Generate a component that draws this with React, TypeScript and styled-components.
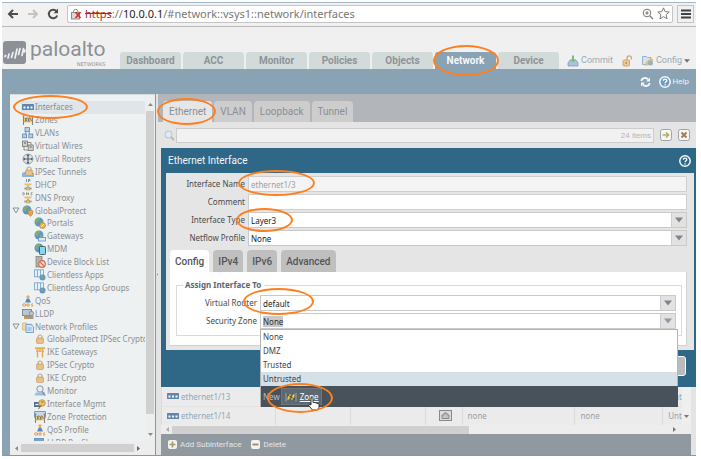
import React from "react";
import styled, { createGlobalStyle } from "styled-components";

const uiFont = '"Noto Sans", "Open Sans", sans-serif';
const headFont = 'Roboto, "Liberation Sans", sans-serif';

const colors = {
  band: "#89a3b5",
  panel: "#e4e4e4",
  dialog: "#2f6886",
  muted: "#8b8f94",
  ring: "#ff7f1f",
};

const GlobalStyle = createGlobalStyle`
  *, *::before, *::after { box-sizing: border-box; }
  body { margin: 0; background: #fff; font-family: ${uiFont}; font-size: 8px; }
  button, input, select { font: inherit; color: inherit; margin: 0; padding: 0; border: 0; background: none; border-radius: 0; }
  ul { list-style: none; margin: 0; padding: 0; }
  svg { display: block; flex: none; }
`;

/* ---------- shell ---------- */

const Page = styled.div`
  height: 100vh;
  padding: 2px 5px 3px 2px;
`;

const Shell = styled.div`
  height: 100%;
  display: flex;
  flex-direction: column;
  border-top: 1px solid #a4b8c8;
  border-bottom: 1px solid #8299aa;
  background: ${colors.band};
`;

const BrowserBar = styled.div`
  flex: none;
  height: 24px;
  display: flex;
  align-items: center;
  gap: 8px;
  padding: 0 2px 2px 5px;
  background: #f1f1f1;
  border-bottom: 1px solid #b9b9b9;
`;

const IconButton = styled.button`
  display: flex;
  align-items: center;
  justify-content: center;
  flex: none;
`;

const Address = styled.div`
  flex: 1;
  min-width: 0;
  height: 18px;
  display: flex;
  align-items: center;
  gap: 3px;
  padding: 0 2px 0 3px;
  margin-right: -4px;
  background: #fff;
  border: 1px solid #c4c4c4;
  border-radius: 2px;
`;

const Url = styled.span`
  flex: 1;
  font-size: 11px;
  line-height: 16px;
  white-space: nowrap;
  overflow: hidden;
  color: #777;
`;

const Insecure = styled.s`
  color: #b42525;
`;

const Host = styled.span`
  color: #222;
`;

const MenuButton = styled(IconButton)`
  width: 17px;
  height: 18px;
  border: 1px solid #c4c4c4;
`;

const Header = styled.header`
  flex: none;
  height: 42px;
  display: flex;
  align-items: flex-end;
  background: #f0f0f0;
`;

const Logo = styled.div`
  flex: none;
  width: 118px;
  align-self: flex-start;
  display: flex;
  align-items: center;
  gap: 4px;
  padding: 10px 0 0 1px;
  color: #8b9196;
`;

const LogoText = styled.div`
  font-family: ${headFont};
  font-size: 21px;
  line-height: 24px;
`;

const LogoSub = styled.div`
  font-family: "DejaVu Sans", sans-serif;
  font-size: 5px;
  line-height: 6px;
  text-align: right;
`;

const MainTabs = styled.nav`
  display: flex;
  gap: 2px;
`;

const MainTab = styled.button<{ $active?: boolean }>`
  position: relative;
  width: 61px;
  height: 17px;
  border-radius: 3px 3px 0 0;
  font-family: ${headFont};
  font-weight: bold;
  font-size: 10px;
  line-height: 18px;
  color: ${(p) => (p.$active ? "#f4f8fa" : "#8d9498")};
  background: ${(p) => (p.$active ? colors.band : "#d3dada")};
`;

const Tools = styled.div`
  margin-left: auto;
  display: flex;
  align-items: center;
  gap: 9px;
  padding-right: 6px;
`;

const ToolButton = styled.button<{ $light?: boolean }>`
  display: flex;
  align-items: center;
  gap: 2px;
  font-family: ${headFont};
  font-size: ${(p) => (p.$light ? "8px" : "9px")};
  line-height: 17px;
  color: ${(p) => (p.$light ? "#eef4f8" : "#98a9b5")};
`;

const HelpBand = styled.div`
  flex: none;
  height: 25px;
  display: flex;
  align-items: center;
  justify-content: flex-end;
  gap: 8px;
  padding-right: 7px;
`;

const Body = styled.div`
  flex: 1;
  min-height: 0;
  display: flex;
  padding-left: 8px;
`;

/* ---------- sidebar ---------- */

const Sidebar = styled.aside`
  flex: none;
  width: 145px;
  display: flex;
  flex-direction: column;
  background: #eef1f1;
  border-top: 1px solid #d4dadd;
`;

const TreeArea = styled.div`
  flex: 1;
  min-height: 0;
  display: flex;
`;

const Tree = styled.ul`
  flex: 1;
  min-width: 0;
  padding-top: 6px;
  overflow: hidden;
`;

const TreeRows = styled.div`
  display: flex;
  flex-direction: column;
  height: 348px;
`;

const TreeItem = styled.li<{ $level: number; $selected?: boolean }>`
  position: relative;
  flex: 1;
  display: flex;
  align-items: center;
  gap: 1px;
  margin-left: ${(p) => (p.$selected ? "11px" : "0")};
  padding-left: ${(p) => (p.$selected ? 1 : p.$level * 12)}px;
  white-space: nowrap;
  line-height: 12px;
  color: ${colors.muted};
  background: ${(p) => (p.$selected ? "#dfe5e8" : "transparent")};
`;

const Twisty = styled.button`
  width: 8px;
  margin: 0 1px 0 -10px;
`;

const VTrack = styled.div`
  flex: none;
  width: 10px;
  display: flex;
  flex-direction: column;
  align-items: center;
  justify-content: space-between;
  padding: 7px 0 4px;
  gap: 4px;
  background: #eeeeee;
`;

const VThumb = styled.div`
  width: 8px;
  flex: 1;
  margin-bottom: 14px;
  background: #d0d0d0;
`;

const HTrack = styled.div<{ $height: number; $end: number }>`
  flex: none;
  height: ${(p) => p.$height}px;
  display: flex;
  align-items: center;
  gap: 2px;
  padding: 0 ${(p) => p.$end}px 0 4px;
  background: #ededed;
`;

const GridTrack = styled(HTrack)`
  margin: 0 5px 0 3px;
`;

const HThumb = styled.div<{ $share: number }>`
  width: ${(p) => p.$share}%;
  height: 8px;
  margin-right: auto;
  background: #d0d0d0;
`;

const Splitter = styled.div`
  flex: none;
  width: 3px;
  display: flex;
  align-items: center;
  background: #dfe4e7;
  border-left: 1px solid #7f98aa;
`;

/* ---------- content ---------- */

const Content = styled.main`
  flex: 1;
  min-width: 0;
  display: flex;
  flex-direction: column;
  background: ${colors.panel};
`;

const SubTabs = styled.div`
  flex: none;
  height: 28px;
  display: flex;
  align-items: flex-end;
  gap: 2px;
  padding-left: 5px;
  background: #b2b6bb;
`;

const SubTab = styled.button<{ $active?: boolean }>`
  position: relative;
  height: 21px;
  padding: 0 6px;
  border-radius: 4px 4px 0 0;
  font-family: ${headFont};
  font-size: 10px;
  color: #8b8f93;
  background: ${(p) => (p.$active ? "#e6e6e6" : "#cdcdcd")};
`;

const SearchRow = styled.div`
  flex: none;
  height: 26px;
  display: flex;
  align-items: center;
  gap: 6px;
  padding: 0 6px 0 6px;
`;

const SearchBox = styled.label`
  flex: 1;
  display: flex;
  align-items: center;
  gap: 1px;
`;

const SearchField = styled.span`
  flex: 1;
  height: 15px;
  display: flex;
  align-items: center;
  padding-right: 2px;
  background: #f1f1f1;
  border: 1px solid #cccccc;
  color: #b5b5b5;
  font-family: "Liberation Sans", sans-serif;
  font-size: 8px;
`;

const SearchInput = styled.input`
  flex: 1;
  min-width: 0;
  outline: none;
`;

const Dialog = styled.section`
  position: relative;
  z-index: 2;
  flex: none;
  margin-left: 3px;
  padding: 0 2px 0 5px;
  background: ${colors.dialog};
`;

const DialogTitle = styled.div`
  height: 25px;
  display: flex;
  align-items: center;
  justify-content: space-between;
  padding: 0 3px 0 2px;
  font-family: ${headFont};
  font-size: 10px;
  color: #f2f7fa;
`;

const DialogBody = styled.div`
  padding: 3px 7px 4px 4px;
  background: #e5e5e5;
`;

const FormRow = styled.div<{ $labelWidth: number }>`
  position: relative;
  display: grid;
  grid-template-columns: ${(p) => p.$labelWidth}px 1fr;
  column-gap: 3px;
  align-items: center;
  height: 16px;
  margin-bottom: 2px;
  color: #4a4a4a;
  > label, > span:first-child { text-align: right; line-height: 12px; }
`;

const TextInput = styled.input`
  width: 100%;
  height: 16px;
  padding: 1px 2px 0;
  background: #fff;
  border: 1px solid #cfcfcf;
  color: #333;
  &:disabled { background: #f4f4f4; color: #a0a0a0; }
`;

const Picker = styled.div`
  display: flex;
  height: 16px;
  background: #fff;
  border: 1px solid #c9c9c9;
`;

const Select = styled.select`
  flex: 1;
  min-width: 0;
  appearance: none;
  padding: 1px 2px 0;
  color: #222;
  outline: none;
`;

const ComboButton = styled.button`
  flex: 1;
  padding: 1px 2px 0;
  text-align: left;
  color: #333;
`;

const Selected = styled.span`
  background: #c9c9c9;
`;

const Trigger = styled.span`
  width: 15px;
  display: flex;
  align-items: center;
  justify-content: center;
  background: #e2e2e2;
  border-left: 1px solid #cfcfcf;
`;

const DialogTabs = styled.div`
  display: flex;
  gap: 4px;
  padding-top: 2px;
`;

const DialogTab = styled.button<{ $active?: boolean }>`
  height: 22px;
  padding: 0 5px;
  border-radius: 4px 4px 0 0;
  font-family: ${headFont};
  font-weight: 500;
  font-size: 10px;
  color: #555;
  background: ${(p) => (p.$active ? "#fff" : "#bfbfbf")};
`;

const TabPanel = styled.div`
  padding: 7px 4px 9px 6px;
  background: #fff;
  border-right: 1px solid #d2d2d2;
  border-bottom: 1px solid #d2d2d2;
`;

const Group = styled.fieldset`
  margin: 0;
  padding: 4px 5px 4px 6px;
  border: 1px solid #dadada;
  min-width: 0;
`;

const Legend = styled.legend`
  padding: 0 3px 0 2px;
  font-weight: bold;
  font-size: 8px;
  line-height: 12px;
  color: #5a6470;
`;

const Popup = styled.div`
  position: absolute;
  top: 16px;
  left: 77px;
  right: -2px;
  z-index: 3;
  background: #fff;
  border: 1px solid #b4b4b4;
  color: #444;
`;

const Option = styled.li<{ $active?: boolean }>`
  height: 14px;
  padding: 0 2px;
  line-height: 14px;
  background: ${(p) => (p.$active ? "#d6e0e7" : "transparent")};
`;

const NewBar = styled.div`
  position: relative;
  height: 21px;
  display: flex;
  align-items: center;
  gap: 1px;
  padding-left: 2px;
  margin: 0 -1px -1px 0;
  background: #47525b;
  color: #b9c0c5;
`;

const NewZone = styled.button`
  height: 17px;
  display: flex;
  align-items: center;
  gap: 3px;
  padding: 0 2px 0 3px;
  background: #5e6870;
  border: 1px solid #6d777f;
  color: #fff;
  text-decoration: underline;
`;

const Cursor = styled.svg`
  position: absolute;
  left: 47px;
  top: 11px;
`;

const DialogFooter = styled.div`
  height: 37px;
  display: flex;
  align-items: center;
  justify-content: flex-end;
  padding: 0 8px 6px 0;
`;

const DialogButton = styled.button`
  width: 50px;
  height: 20px;
  border: 1px solid #fff;
  border-radius: 3px;
  background: #b9bcbe;
`;

const Grid = styled.div`
  flex: 1;
  min-height: 0;
  display: flex;
  overflow: hidden;
  margin: 0 5px 0 3px;
  background: #ebebeb;
`;

const Table = styled.table`
  flex: 1;
  align-self: flex-start;
  table-layout: fixed;
  border-collapse: collapse;
  color: #9aa0a5;
`;

const Cell = styled.td<{ $blue?: boolean }>`
  height: 19px;
  padding: 0 0 0 5px;
  white-space: nowrap;
  overflow: hidden;
  border-left: 1px solid #dcdcdc;
  border-bottom: 1px solid #e3e3e3;
  color: ${(p) => (p.$blue ? "#8fa8bc" : "inherit")};
`;

const CellLine = styled.div<{ $center?: boolean }>`
  display: flex;
  align-items: center;
  gap: 2px;
  margin-left: ${(p) => (p.$center ? "8px" : "0")};
`;

const GridScroll = styled.div`
  flex: none;
  width: 9px;
  display: flex;
  align-items: flex-end;
  justify-content: center;
  padding-bottom: 6px;
  background: #efefef;
`;

const Footer = styled.footer`
  flex: none;
  height: 21px;
  display: flex;
  align-items: center;
  gap: 10px;
  margin: 0 5px 0 3px;
  padding-left: 7px;
  background: #9199a0;
`;

const FooterButton = styled.button`
  display: flex;
  align-items: center;
  gap: 3px;
  font-family: ${headFont};
  font-size: 8px;
  color: #e3e6e8;
`;

/* Highlight ellipse laid over the control that it marks. */
const Ring = styled.span<{ $x: number; $y: number; $w: number; $h: number }>`
  position: absolute;
  z-index: 5;
  left: ${(p) => p.$x}px;
  top: ${(p) => p.$y}px;
  width: ${(p) => p.$w}px;
  height: ${(p) => p.$h}px;
  border: 2px solid ${colors.ring};
  border-radius: 50%;
  pointer-events: none;
`;

/* ---------- icons ---------- */

const Arrow = ({ dir, size = 5, color = "#8a8a8a" }: { dir: "up" | "down" | "left" | "right"; size?: number; color?: string }) => {
  const points = {
    up: "0,8 5,2 10,8",
    down: "0,2 5,8 10,2",
    left: "8,0 2,5 8,10",
    right: "2,0 8,5 2,10",
  }[dir];
  return (
    <svg width={size} height={size} viewBox="0 0 10 10" aria-hidden="true">
      <polygon points={points} fill={color} />
    </svg>
  );
};

const globe = (
  <g>
    <circle cx="5" cy="5" r="4.5" fill="#5f94c8" />
    <path d="M2 2 Q4 0 6 1 L6 3 L4 4 L4 6 L2 6 L1 4Z M6 5 L9 4 L8 8 L6 8Z" fill="#7fb069" />
  </g>
);

const goldLock = (x: number, y: number) => (
  <g transform={`translate(${x} ${y})`}>
    <path d="M2 4 V3 a2 2 0 0 1 4 0 V4" fill="none" stroke="#b9a58c" strokeWidth="1.2" />
    <rect x="0.5" y="4" width="7" height="5.5" rx="1" fill="#e3b878" stroke="#c39a62" strokeWidth="0.6" />
    <path d="M1.5 6h5M1.5 8h5" stroke="#f3dcb4" strokeWidth="0.6" />
  </g>
);

const qosFigure = (
  <g>
    <circle cx="6" cy="1.800" r="1.600" fill="#e8a952" />
    <path d="M4.800 3.400h2.400l1.800 4.200H3z" fill="#5b87bd" />
    <ellipse cx="2.200" cy="10" rx="1.500" ry="1.300" fill="none" stroke="#e6973f" />
    <ellipse cx="6" cy="10" rx="1.300" ry="1.200" fill="none" stroke="#e6973f" />
    <path d="M11 8.800c-2 0-2 1.100-.8 1.200s1 1.300-1 1.200" fill="none" stroke="#e6973f" />
  </g>
);

const ports = (
  <g>
    <rect x="0" y="3" width="12" height="6" rx="0.6" fill="#5f86ae" />
    <path d="M1.500 7.500v-2h2v2zM5 7.500v-2h2v2zM8.500 7.500v-2h2v2z" fill="#f4f8fb" />
  </g>
);

const fence = (
  <g>
    <path d="M1.500 1.500v9.500M10.500 1.500v9.500M0.500 2h2M9.500 2h2" stroke="#8a847c" strokeWidth="1.100" />
    <rect x="2" y="3" width="8" height="5.500" fill="#f0d077" />
    <path d="M3 4l2 3.500M5.500 4l2 3.500M8 4l1.500 3M3 8L4.500 3.500M6 8l1.500-4.500" stroke="#77716a" strokeWidth="0.900" />
  </g>
);

const server = (label: "ip" | "dns") => (
  <g>
    {label === "ip" ? (
      <path d="M4.500 0v3M6.500 3V0.500h1.500v1.200H6.500" fill="none" stroke="#6f93b8" strokeWidth="1" />
    ) : (
      <path d="M1 3V0.500c2 0 2 2.500 0 2.500M4.500 3V0.500l2 2.500V0.500M10.500 0.500c-2 0-2 1.200-1 1.300s1 1.200-1 1.200" fill="none" stroke="#8c8f92" strokeWidth="0.900" />
    )}
    <path d="M2 4.500h8l-1 2H3z" fill="#edc267" />
    <path d="M6 6.500v2M2.500 9.500h7M3 8.500v2M9 8.500v2" stroke="#7a9cc0" strokeWidth="1.200" />
    <rect x="4.200" y="8.200" width="3.600" height="2.800" fill="#edc267" stroke="#b08f4c" strokeWidth="0.500" />
  </g>
);

const drawings: Record<string, React.ReactNode> = {
  ports,
  fence,
  vlan: (
    <g fill="#b7cfe6" stroke="#5d86b3" strokeWidth="0.800">
      <path d="M4 5l-1 3M7 5l1 3" fill="none" />
      <rect x="3" y="0.600" width="4.500" height="4" />
      <rect x="0.600" y="7" width="4" height="3.800" />
      <rect x="6.800" y="7" width="4" height="3.800" />
    </g>
  ),
  wires: (
    <g stroke="#77736d" strokeWidth="0.800" fill="#d4d1ca">
      <rect x="0.500" y="1" width="5" height="5.500" />
      <rect x="6.200" y="5" width="5" height="5.500" />
      <path d="M2 6.500v3.500h4M5.500 2.500h3.500V5" fill="none" />
      <path d="M2 3h2M7.700 7h2" stroke="#3f3f3f" />
    </g>
  ),
  router: (
    <g>
      <circle cx="6" cy="6" r="5" fill="#dfe3e6" stroke="#8d979f" strokeWidth="0.900" />
      <path d="M6 1.500v9M1.500 6h9" stroke="#58646e" strokeWidth="1.200" />
      <path d="M6 1l1.600 2H4.400zM6 11l1.600-2H4.400zM1 6l2-1.600v3.200zM11 6L9 4.400v3.200z" fill="#58646e" />
    </g>
  ),
  tunnel: (
    <g>
      <path d="M0 7q4-3 12 0v4H0z" fill="#8fb4d6" />
      {goldLock(3, 0)}
    </g>
  ),
  dhcp: server("ip"),
  dns: server("dns"),
  protect: (
    <g>
      {globe}
      <path d="M6 6q3-2 5 0 0 4-2.500 5.500Q6 10 6 6z" fill="#eea24c" stroke="#a9733a" strokeWidth="0.500" />
    </g>
  ),
  portal: (
    <g>
      {globe}
      <circle cx="8.500" cy="8.500" r="3" fill="#e5b24f" stroke="#a97f37" strokeWidth="0.600" />
      <path d="M7 10l3-3" stroke="#fff" strokeWidth="0.800" />
    </g>
  ),
  gateway: (
    <g>
      {globe}
      <rect x="4.500" y="7.500" width="7" height="3.500" fill="#dcebf7" stroke="#5f8fbe" strokeWidth="0.800" />
    </g>
  ),
  mdm: (
    <g>
      {globe}
      <rect x="5.500" y="3.500" width="6" height="8" rx="0.800" fill="#7fdcec" stroke="#51606b" strokeWidth="1" />
    </g>
  ),
  block: (
    <g>
      <rect x="2" y="0.500" width="6" height="10.500" fill="#b5b2ae" stroke="#86827d" strokeWidth="0.800" />
      <circle cx="8" cy="8" r="3.300" fill="#f3e1d8" stroke="#d0683f" strokeWidth="1.200" />
      <path d="M5.800 5.800l4.400 4.400" stroke="#d0683f" strokeWidth="1.200" />
    </g>
  ),
  clientless: (
    <g>
      <rect x="0.500" y="0.800" width="9" height="7" fill="#e6f0f8" stroke="#7ea6cc" strokeWidth="0.900" />
      <path d="M3.500 1v7M6.500 1v7" stroke="#7ea6cc" strokeWidth="0.900" />
      <circle cx="8.500" cy="8.500" r="3" fill="#6394c6" />
      <path d="M7 7l2-.6v2l-1.400.6zM9 9.500l2-1-.8 2z" fill="#82b36b" />
    </g>
  ),
  qos: qosFigure,
  lldp: (
    <g>
      <rect x="0.500" y="1.500" width="9" height="6" fill="#b9c6d1" stroke="#77858f" strokeWidth="0.900" />
      <rect x="2" y="7.500" width="9.500" height="3.500" fill="#9d9993" />
      <circle cx="9.500" cy="5.500" r="2.200" fill="#c9c4bb" stroke="#827d76" strokeWidth="0.700" />
      <path d="M2 10.500h3" stroke="#e59a43" strokeWidth="1.200" />
    </g>
  ),
  profiles: (
    <g>
      <path d="M0.500 2h4l1 1.200H10V9H0.500z" fill="#f0d9a8" stroke="#cdb078" strokeWidth="0.700" />
      <path d="M4 3.500h5l2.500 2.500v5.500H4z" fill="#d5e6f5" stroke="#6d99c6" strokeWidth="0.900" />
      <path d="M5.500 7h4M5.500 9h4" stroke="#6d99c6" strokeWidth="0.800" />
    </g>
  ),
  lock: goldLock(2, 1),
  gate: (
    <g stroke="#e2ab55" fill="none">
      <path d="M1 2.200h10" strokeWidth="1.800" />
      <path d="M2 5.200h8" strokeWidth="1.200" />
      <path d="M3.500 2v9.500M8.500 2v9.500M6 2v3" strokeWidth="1.500" />
    </g>
  ),
  monitor: (
    <g>
      <path d="M0.500 10.500q1-4 4-3t6-1l1 4z" fill="#9cc1e0" />
      <circle cx="6" cy="4" r="3.200" fill="#e3eef6" stroke="#8697a5" strokeWidth="1" />
      <path d="M8 6.500l3 4" stroke="#8697a5" strokeWidth="1.500" />
    </g>
  ),
  mgmt: (
    <g>
      <rect x="0" y="4" width="7" height="5" fill="#4d7299" />
      <path d="M1.500 6.500h3" stroke="#fff" strokeWidth="1.200" />
      <circle cx="8" cy="5" r="3.300" fill="#f0c069" stroke="#b48740" strokeWidth="0.700" />
      <path d="M4.500 11l3-4M7 4h2.500" stroke="#996f33" strokeWidth="1.100" />
    </g>
  ),
  zoneProtect: (
    <g>
      <path d="M0.500 0.500h11v6h-11z" fill="#c7dbee" stroke="#6d93bb" strokeWidth="0.900" />
      <g transform="translate(0 1)">{fence}</g>
    </g>
  ),
  lldpProfile: (
    <g>
      <rect x="0.500" y="1.500" width="9" height="7" fill="#c9dcee" stroke="#5f8fc0" strokeWidth="0.900" />
      <path d="M0.500 3h9" stroke="#5f8fc0" strokeWidth="1.500" />
      <circle cx="9" cy="6" r="2.200" fill="#e5b668" />
    </g>
  ),
  newZone: (
    <g>
      <path d="M1 2v8.500M11 2v8.500" stroke="#a9a9a9" strokeWidth="0.900" />
      <path d="M2 8.500L4 3.500h2l-2 5zM6 8.500l2-5h2l-2 5z" fill="#f5cf3e" />
      <path d="M2 3.500l8 5" stroke="#3c3c3c" strokeWidth="0.700" />
    </g>
  ),
};

const Icon = ({ name, size = 12 }: { name: string; size?: number }) => (
  <svg width={size} height={size} viewBox="0 0 12 12" aria-hidden="true">
    {drawings[name]}
  </svg>
);

const HelpIcon = ({ fill, size = 11 }: { fill: string; size?: number }) => (
  <svg width={size} height={size} viewBox="0 0 12 12" aria-hidden="true">
    <circle cx="6" cy="6" r="5.200" fill={fill} stroke="#f3f8fb" strokeWidth="1.500" />
    <path d="M4.300 4.800c0-2.200 3.500-2.200 3.500-.2 0 1.200-1.700 1.200-1.700 2.600M6.100 8.200v1.200" fill="none" stroke="#fff" strokeWidth="1.300" />
  </svg>
);

const ConfigIcon = () => (
  <svg width="12" height="12" viewBox="0 0 12 12" aria-hidden="true">
    <path d="M0.500 1.500h4l1 1H9v7H0.500z" fill="#d3e3f0" stroke="#8aaccb" strokeWidth="0.900" />
    <path d="M3 11l1-4 5-4 2.500 2-4 5z" fill="#e8bd73" />
    <circle cx="8.500" cy="8" r="2.500" fill="#8fb3d3" />
  </svg>
);

/* ---------- data ---------- */

type Node = { icon: string; label: string; level: number; open?: boolean; selected?: boolean };

const nodes: Node[] = [
  { icon: "ports", label: "Interfaces", level: 1, selected: true },
  { icon: "fence", label: "Zones", level: 1 },
  { icon: "vlan", label: "VLANs", level: 1 },
  { icon: "wires", label: "Virtual Wires", level: 1 },
  { icon: "router", label: "Virtual Routers", level: 1 },
  { icon: "tunnel", label: "IPSec Tunnels", level: 1 },
  { icon: "dhcp", label: "DHCP", level: 1 },
  { icon: "dns", label: "DNS Proxy", level: 1 },
  { icon: "protect", label: "GlobalProtect", level: 1, open: true },
  { icon: "portal", label: "Portals", level: 2 },
  { icon: "gateway", label: "Gateways", level: 2 },
  { icon: "mdm", label: "MDM", level: 2 },
  { icon: "block", label: "Device Block List", level: 2 },
  { icon: "clientless", label: "Clientless Apps", level: 2 },
  { icon: "clientless", label: "Clientless App Groups", level: 2 },
  { icon: "qos", label: "QoS", level: 1 },
  { icon: "lldp", label: "LLDP", level: 1 },
  { icon: "profiles", label: "Network Profiles", level: 1, open: true },
  { icon: "lock", label: "GlobalProtect IPSec Crypto", level: 2 },
  { icon: "gate", label: "IKE Gateways", level: 2 },
  { icon: "lock", label: "IPSec Crypto", level: 2 },
  { icon: "lock", label: "IKE Crypto", level: 2 },
  { icon: "monitor", label: "Monitor", level: 2 },
  { icon: "mgmt", label: "Interface Mgmt", level: 2 },
  { icon: "zoneProtect", label: "Zone Protection", level: 2 },
  { icon: "qos", label: "QoS Profile", level: 2 },
  { icon: "lldpProfile", label: "LLDP Profile", level: 2 },
];

const mainTabs = ["Dashboard", "ACC", "Monitor", "Policies", "Objects", "Network", "Device"];
const subTabs = ["Ethernet", "VLAN", "Loopback", "Tunnel"];
const dialogTabs = ["Config", "IPv4", "IPv6", "Advanced"];
const zones = ["None", "DMZ", "Trusted", "Untrusted"];

/* ---------- parts ---------- */

const Browser = () => (
  <BrowserBar>
    <IconButton aria-label="Back">
      <svg width="12" height="12" viewBox="0 0 12 12">
        <path d="M11 6H2M6 2L2 6l4 4" fill="none" stroke="#4c4c4c" strokeWidth="2" />
      </svg>
    </IconButton>
    <IconButton aria-label="Forward">
      <svg width="12" height="12" viewBox="0 0 12 12">
        <path d="M1 6h9M6 2l4 4-4 4" fill="none" stroke="#c3c3c3" strokeWidth="2" />
      </svg>
    </IconButton>
    <IconButton aria-label="Reload">
      <svg width="12" height="12" viewBox="0 0 12 12">
        <path d="M9.500 3.200A4.300 4.300 0 1 0 10.200 7.500" fill="none" stroke="#4c4c4c" strokeWidth="2" />
        <path d="M11 0.500V5.300H6.500z" fill="#4c4c4c" />
      </svg>
    </IconButton>
    <Address>
      <svg width="11" height="12" viewBox="0 0 11 12" aria-hidden="true">
        <path d="M2.500 5V3.500a2.200 2.200 0 0 1 4.400 0V5" fill="none" stroke="#8d8d8d" />
        <rect x="0.500" y="4.500" width="8" height="6.500" fill="#d9d9d9" stroke="#8d8d8d" />
        <path d="M4.500 4l5 6M9.500 4l-5 6" stroke="#d8322b" strokeWidth="1.800" />
      </svg>
      <Url>
        <Insecure>https</Insecure>://<Host>10.0.0.1</Host>/#network::vsys1::network/interfaces
      </Url>
      <IconButton aria-label="Zoom">
        <svg width="12" height="12" viewBox="0 0 12 12">
          <circle cx="5" cy="5" r="3.800" fill="none" stroke="#777" />
          <path d="M8 8l3 3M3.300 5h3.400M5 3.300v3.400" stroke="#777" strokeWidth="1.200" />
        </svg>
      </IconButton>
      <IconButton aria-label="Bookmark">
        <svg width="13" height="13" viewBox="0 0 12 12">
          <path d="M6 0.800l1.500 3.500 3.800.3-2.900 2.500.9 3.800L6 8.900l-3.300 2 .9-3.800L.7 4.600l3.800-.3z" fill="none" stroke="#777" strokeWidth="0.900" />
        </svg>
      </IconButton>
    </Address>
    <MenuButton aria-label="Menu">
      <svg width="10" height="10" viewBox="0 0 10 10">
        <path d="M0 1.500h10M0 5h10M0 8.500h10" stroke="#3f4148" strokeWidth="2" />
      </svg>
    </MenuButton>
  </BrowserBar>
);

const SelectField = ({ id, label, value, labelWidth, children }: { id: string; label: string; value: string; labelWidth: number; children?: React.ReactNode }) => (
  <FormRow $labelWidth={labelWidth}>
    <label htmlFor={id}>{label}</label>
    <Picker>
      <Select id={id} defaultValue={value}>
        <option>{value}</option>
      </Select>
      <Trigger>
        <Arrow dir="down" size={8} color="#7d868e" />
      </Trigger>
    </Picker>
    {children}
  </FormRow>
);

const InterfaceDialog = () => (
  <Dialog role="dialog" aria-labelledby="dialog-title">
    <DialogTitle>
      <span id="dialog-title">Ethernet Interface</span>
      <IconButton aria-label="Dialog help">
        <HelpIcon fill={colors.dialog} size={12} />
      </IconButton>
    </DialogTitle>
    <DialogBody>
      <FormRow $labelWidth={75}>
        <label htmlFor="if-name">Interface Name</label>
        <TextInput id="if-name" defaultValue="ethernet1/3" disabled />
        <Ring $x={68} $y={-6} $w={77} $h={26} />
      </FormRow>
      <FormRow $labelWidth={75}>
        <label htmlFor="if-comment">Comment</label>
        <TextInput id="if-comment" />
      </FormRow>
      <SelectField id="if-type" label="Interface Type" value="Layer3" labelWidth={75}>
        <Ring $x={66} $y={-4} $w={57} $h={24} />
      </SelectField>
      <SelectField id="if-netflow" label="Netflow Profile" value="None" labelWidth={75} />
      <DialogTabs role="tablist">
        {dialogTabs.map((t, i) => (
          <DialogTab key={t} role="tab" aria-selected={i === 0} $active={i === 0}>
            {t}
          </DialogTab>
        ))}
      </DialogTabs>
      <TabPanel role="tabpanel">
        <Group>
          <Legend>Assign Interface To</Legend>
          <SelectField id="if-router" label="Virtual Router" value="default" labelWidth={74}>
            <Ring $x={60} $y={-7} $w={71} $h={27} />
          </SelectField>
          <FormRow $labelWidth={74}>
            <span id="zone-label">Security Zone</span>
            <Picker>
              <ComboButton role="combobox" aria-expanded="true" aria-controls="zone-list" aria-labelledby="zone-label">
                <Selected>None</Selected>
              </ComboButton>
              <Trigger>
                <Arrow dir="down" size={8} color="#8d9aa6" />
              </Trigger>
            </Picker>
            <Popup>
              <ul id="zone-list" role="listbox" aria-labelledby="zone-label">
                {zones.map((z) => (
                  <Option key={z} role="option" aria-selected={z === "Untrusted"} $active={z === "Untrusted"}>
                    {z}
                  </Option>
                ))}
              </ul>
              <NewBar>
                New
                <NewZone>
                  <Icon name="newZone" />
                  Zone
                </NewZone>
                <Cursor width="12" height="14" viewBox="0 0 12 14" aria-hidden="true">
                  <path
                    d="M3 1q1.500-1 2 .5V5.500h1q1-.5 1.500.5 1-.4 1.500.5 1.500-.3 2 1V10.500L9.500 13H4.500L.8 8.500Q.8 7 2 7.300L3 8z"
                    fill="#fff"
                    stroke="#222"
                    strokeWidth="0.900"
                  />
                </Cursor>
                <Ring $x={6} $y={-3} $w={66} $h={30} />
              </NewBar>
            </Popup>
          </FormRow>
        </Group>
      </TabPanel>
    </DialogBody>
    <DialogFooter>
      <DialogButton aria-label="Cancel" />
    </DialogFooter>
  </Dialog>
);

const InterfaceTable = () => (
  <Grid>
    <Table>
      <colgroup>
        <col width="114" />
        <col width="75" />
        <col width="75" />
        <col width="37" />
        <col width="113" />
        <col width="88" />
        <col width="19" />
      </colgroup>
      <tbody>
        {["ethernet1/13", "ethernet1/14"].map((name) => (
          <tr key={name}>
            <Cell $blue>
              <CellLine>
                <Icon name="ports" />
                {name}
              </CellLine>
            </Cell>
            <Cell />
            <Cell />
            <Cell>
              <CellLine $center>
                <svg width="13" height="11" viewBox="0 0 13 11" aria-hidden="true">
                  <rect x="0.500" y="0.500" width="12" height="10" fill="#dcdcdc" stroke="#85898c" />
                  <path d="M3 8.500V5h2V3h3v2h2v3.500z" fill="#c4c4c4" stroke="#85898c" />
                </svg>
              </CellLine>
            </Cell>
            <Cell>none</Cell>
            <Cell>none</Cell>
            <Cell>Unt</Cell>
          </tr>
        ))}
      </tbody>
    </Table>
    <GridScroll>
      <Arrow dir="down" color="#777" />
    </GridScroll>
  </Grid>
);

const App = () => (
  <Page>
    <GlobalStyle />
    <Shell>
      <Browser />
      <Header>
        <Logo>
          <svg width="23" height="23" viewBox="0 0 23 23" aria-hidden="true">
            <rect width="23" height="23" rx="3" fill="#8b9196" />
            <path
              d="M2 15.500l.5-1M5 17l1-4M8.500 16.500l1.500-5M12 17l2-9M15.500 13.500l1.500-6M19 14.500l1.500-7M21.500 11l.5-2"
              stroke="#f0f0f0"
              strokeWidth="1.700"
              strokeLinecap="round"
            />
          </svg>
          <div>
            <LogoText>paloalto</LogoText>
            <LogoSub>NETWORKS</LogoSub>
          </div>
        </Logo>
        <MainTabs>
          {mainTabs.map((t) => (
            <MainTab key={t} $active={t === "Network"}>
              {t}
              {t === "Network" && <Ring $x={-2} $y={-7} $w={66} $h={31} />}
            </MainTab>
          ))}
        </MainTabs>
        <Tools>
          <ToolButton>
            <svg width="12" height="12" viewBox="0 0 12 12" aria-hidden="true">
              <path d="M1 8l2-3h6l2 3v3H1z" fill="#a9c3da" stroke="#7c9fc0" strokeWidth="0.800" />
              <path d="M6 7.500L3.300 4.500h1.700V0.500h2v4h1.700z" fill="#7fba7c" />
            </svg>
            Commit
          </ToolButton>
          <ToolButton aria-label="Lock">
            <svg width="11" height="12" viewBox="0 0 11 12" aria-hidden="true">
              <path d="M5 5V3a2.200 2.200 0 0 1 4.400 0V4.500" fill="none" stroke="#c9ab84" strokeWidth="1.300" />
              <rect x="1" y="5" width="6.500" height="6" rx="1" fill="#ecca94" stroke="#cda067" strokeWidth="0.900" />
              <path d="M4.200 7v2" stroke="#b08347" strokeWidth="1.200" />
            </svg>
          </ToolButton>
          <ToolButton>
            <ConfigIcon />
            Config
            <Arrow dir="down" size={6} color="#6d7479" />
          </ToolButton>
        </Tools>
      </Header>
      <HelpBand>
        <ToolButton $light aria-label="Refresh">
          <svg width="11" height="10" viewBox="0 0 11 10" aria-hidden="true">
            <path d="M1.500 4A3.500 3 0 0 1 8 2.500M9.500 6A3.500 3 0 0 1 3 7.500" fill="none" stroke="#f2f7fa" strokeWidth="1.800" />
            <path d="M10 0.500V4.500H6zM1 9.500V5.500H5z" fill="#f2f7fa" />
          </svg>
        </ToolButton>
        <ToolButton $light>
          <HelpIcon fill="#6f9cc0" size={12} />
          Help
        </ToolButton>
      </HelpBand>
      <Body>
        <Sidebar>
          <TreeArea>
            <Tree>
              <TreeRows>
                {nodes.map((n) => (
                  <TreeItem key={n.label} $level={n.level} $selected={n.selected}>
                    {n.open && (
                      <Twisty aria-label={`Collapse ${n.label}`}>
                        <svg width="8" height="7" viewBox="0 0 8 7">
                          <path d="M1 1h6L4 6z" fill="none" stroke="#8d9195" />
                        </svg>
                      </Twisty>
                    )}
                    <Icon name={n.icon} />
                    {n.label}
                    {n.selected && <Ring $x={-8} $y={-6} $w={75} $h={24} />}
                  </TreeItem>
                ))}
              </TreeRows>
            </Tree>
            <VTrack>
              <Arrow dir="up" />
              <VThumb />
              <Arrow dir="down" />
            </VTrack>
          </TreeArea>
          <HTrack $height={14} $end={14}>
            <Arrow dir="left" />
            <HThumb $share={92} />
            <Arrow dir="right" color="#666" />
          </HTrack>
        </Sidebar>
        <Splitter>
          <Arrow dir="left" size={3} />
        </Splitter>
        <Content>
          <SubTabs role="tablist">
            {subTabs.map((t, i) => (
              <SubTab key={t} role="tab" aria-selected={i === 0} $active={i === 0}>
                {t}
                {i === 0 && <Ring $x={-6} $y={-3} $w={59} $h={27} />}
              </SubTab>
            ))}
          </SubTabs>
          <SearchRow>
            <SearchBox>
              <svg width="11" height="11" viewBox="0 0 11 11" aria-hidden="true">
                <circle cx="4.500" cy="4.500" r="3.500" fill="#dcebf7" stroke="#a9c6df" />
                <path d="M7 7l3 3" stroke="#d2b48c" strokeWidth="1.800" />
              </svg>
              <SearchField>
                <SearchInput aria-label="Search interfaces" />
                24 items
              </SearchField>
            </SearchBox>
            <IconButton aria-label="Apply filter">
              <svg width="12" height="12" viewBox="0 0 12 12">
                <rect x="0.500" y="0.500" width="11" height="11" rx="2" fill="#f5f5f5" stroke="#9ea5aa" />
                <path d="M2.500 6h6M6 3.500L8.700 6 6 8.500" fill="none" stroke="#b9ad5c" strokeWidth="1.500" />
              </svg>
            </IconButton>
            <IconButton aria-label="Clear filter">
              <svg width="12" height="12" viewBox="0 0 12 12">
                <rect x="0.500" y="0.500" width="11" height="11" rx="2" fill="#f5f5f5" stroke="#9ea5aa" />
                <path d="M3.500 3.500l5 5M8.500 3.500l-5 5" stroke="#a97b55" strokeWidth="2" />
              </svg>
            </IconButton>
          </SearchRow>
          <InterfaceDialog />
          <InterfaceTable />
          <GridTrack $height={9} $end={14}>
            <Arrow dir="left" color="#aaa" />
            <HThumb $share={58} />
            <Arrow dir="right" color="#777" />
          </GridTrack>
          <Footer>
            <FooterButton>
              <svg width="9" height="9" viewBox="0 0 9 9" aria-hidden="true">
                <rect width="9" height="9" rx="2" fill="#f3f3ee" />
                <path d="M4.500 1.500v6M1.500 4.500h6" stroke="#a79a62" strokeWidth="1.600" />
              </svg>
              Add Subinterface
            </FooterButton>
            <FooterButton>
              <svg width="9" height="9" viewBox="0 0 9 9" aria-hidden="true">
                <rect width="9" height="9" rx="2" fill="#f3f3ee" />
                <path d="M1.500 4.500h6" stroke="#a5855f" strokeWidth="1.800" />
              </svg>
              Delete
            </FooterButton>
          </Footer>
        </Content>
      </Body>
    </Shell>
  </Page>
);

export default App;
